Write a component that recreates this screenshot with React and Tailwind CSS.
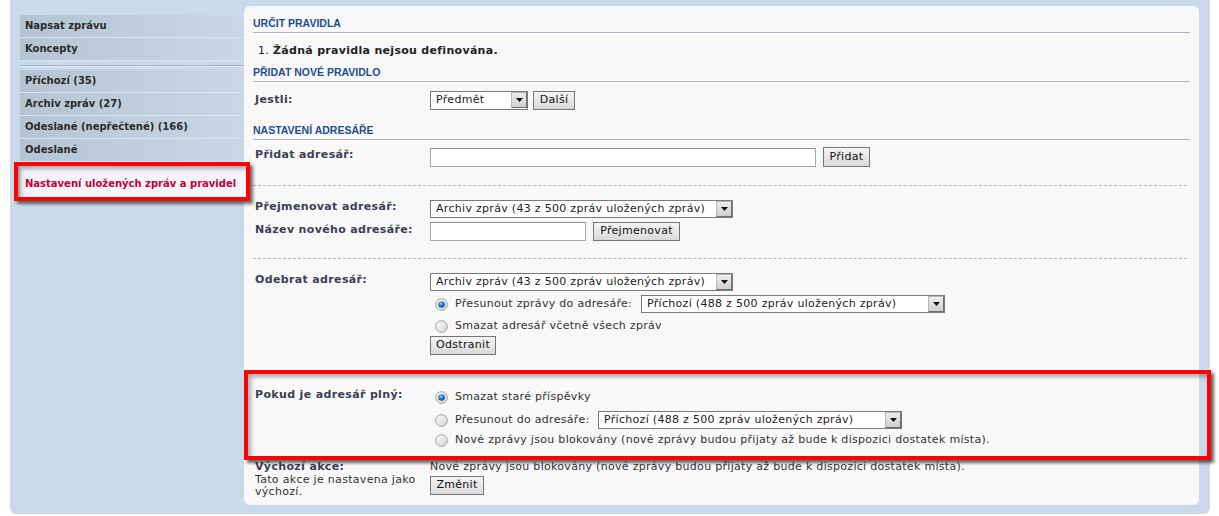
import React from 'react'

const SIDE = ['Příchozí (35)', 'Archiv zpráv (27)', 'Odeslané (nepřečtené) (166)', 'Odeslané']

function SideItem({ children }) {
  return (
    <div className="h-[23px] border-b border-[#d9e4ee] bg-gradient-to-r from-[#b4c4d3] to-[#c9d8e6] pl-[5px] text-[10px] font-bold leading-[22px] text-[#2b2b2b]">
      {children}
    </div>
  )
}

function Heading({ children, className = '' }) {
  return (
    <div className={'border-b border-[#a8b4c1] pb-[2px] font-["Liberation_Sans",Arial,sans-serif] text-[10.5px] font-bold leading-[14px] text-[#1d4f90] ' + className}>
      {children}
    </div>
  )
}

function Select({ value, className = '' }) {
  return (
    <div className={'flex h-[18px] border border-[#7a7a7a] bg-white ' + className}>
      <span className="flex-1 truncate pl-[5px] text-[11px] leading-[16px] tracking-[0.3px] text-[#222]">{value}</span>
      <span className="flex h-[16px] w-[16px] items-center justify-center border border-t-[#b5b5b5] border-l-[#b5b5b5] border-r-[#6f6f6f] border-b-[#6f6f6f] bg-gradient-to-b from-[#eeeeee] to-[#cfcfcf]">
        <svg width="7" height="4" viewBox="0 0 7 4"><path d="M0 0h7L3.5 4z" fill="#111" /></svg>
      </span>
    </div>
  )
}

function Button({ children, className = '' }) {
  return (
    <div className={'flex h-[19px] items-center justify-center border border-[#767676] bg-gradient-to-b from-[#f5f5f5] to-[#d9d9d9] text-[11px] tracking-[0.3px] text-[#111] ' + className}>
      {children}
    </div>
  )
}

function Input({ className = '' }) {
  return <div className={'h-[19px] border border-[#a9a9a9] border-t-[#8f8f8f] bg-white ' + className} />
}

function Radio({ checked }) {
  return (
    <svg width="13" height="13" viewBox="0 0 13 13" className="shrink-0">
      <defs>
        <linearGradient id="rg" x1="0" y1="0" x2="1" y2="1">
          <stop offset="0" stopColor="#ffffff" />
          <stop offset="1" stopColor="#d4d4d4" />
        </linearGradient>
        <radialGradient id="bg" cx="0.4" cy="0.35" r="0.7">
          <stop offset="0" stopColor="#8cc6f0" />
          <stop offset="0.6" stopColor="#1f6fbf" />
          <stop offset="1" stopColor="#0b3f7c" />
        </radialGradient>
      </defs>
      <circle cx="6.5" cy="6.5" r="5.8" fill="url(#rg)" stroke="#9d9d9d" strokeWidth="1" />
      {checked && <circle cx="6.5" cy="6.5" r="3.3" fill="url(#bg)" />}
    </svg>
  )
}

function RadioRow({ checked, children, className = '' }) {
  return (
    <div className={'flex items-center gap-[7px] pl-[5px] text-[11px] tracking-[0.3px] text-[#333] ' + className}>
      <Radio checked={checked} />
      {children}
    </div>
  )
}

function Row({ label, children, className = '', labelClass = 'leading-[16px]' }) {
  return (
    <div className={'flex pl-[2px] ' + className}>
      <div className={'w-[175px] shrink-0 text-[11px] font-bold tracking-[0.35px] text-[#3a4055] ' + labelClass}>{label}</div>
      <div className="flex-1">{children}</div>
    </div>
  )
}

function Dashed({ className = '' }) {
  return <div className={'mr-[3px] border-t border-dashed border-[#adb9c5] ' + className} />
}

export default function App() {
  return (
    <div className="relative h-[516px] w-[1219px] overflow-hidden bg-white font-['DejaVu_Sans',Verdana,sans-serif]">
      <div className="ml-[10px] flex h-[514px] w-[1200px] rounded-b-[6px] bg-[#c9daea]">
        {/* sidebar */}
        <div className="w-[234px] shrink-0 pl-[10px] pt-[15px]">
          <SideItem>Napsat zprávu</SideItem>
          <SideItem>Koncepty</SideItem>
          <div className="mt-[4px] h-[2px] border-t border-[#9fb1c3] bg-[#e3eaf1]" />
          <div className="mt-[3px]">
            {SIDE.map(s => <SideItem key={s}>{s}</SideItem>)}
          </div>
          <div className="flex h-[38px] items-center bg-[#f3f5f8] pl-[5px] pt-[4px] text-[10px] font-bold text-[#c4003a]">
            Nastavení uložených zpráv a pravidel
          </div>
        </div>

        {/* main card */}
        <div className="mt-[6px] h-[499px] w-[955px] shrink-0 rounded-[6px] bg-[#f8f8f8] px-[9px] pt-[10px] text-[#333]">
          <Heading>URČIT PRAVIDLA</Heading>
          <div className="mt-[11px] flex pl-[5px] text-[11px] leading-[14px] tracking-[0.3px] text-[#222]">
            <span className="w-[15px]">1.</span>
            <span className="font-bold">Žádná pravidla nejsou definována.</span>
          </div>

          <Heading className="mt-[7px]">PŘIDAT NOVÉ PRAVIDLO</Heading>
          <Row label="Jestli:" className="mt-[9px]" labelClass="leading-[18px]">
            <div className="flex gap-[5px]">
              <Select value="Předmět" className="h-[19px] w-[98px]" />
              <Button className="w-[42px]">Další</Button>
            </div>
          </Row>

          <Heading className="mt-[13px]">NASTAVENÍ ADRESÁŘE</Heading>
          <Row label="Přidat adresář:" className="mt-[7px]">
            <div className="flex items-center gap-[7px]">
              <Input className="h-[18px] w-[386px]" />
              <Button className="h-[20px] w-[47px]">Přidat</Button>
            </div>
          </Row>

          <Dashed className="mt-[18px]" />
          <Row label="Přejmenovat adresář:" className="mt-[14px]" labelClass="leading-[14px]">
            <Select value="Archiv zpráv (43 z 500 zpráv uložených zpráv)" className="w-[303px]" />
          </Row>
          <Row label="Název nového adresáře:" className="mt-[4px]">
            <div className="flex gap-[7px]">
              <Input className="w-[156px]" />
              <Button className="w-[87px]">Přejmenovat</Button>
            </div>
          </Row>

          <Dashed className="mt-[17px]" />
          <Row label="Odebrat adresář:" className="mt-[14px]" labelClass="leading-[14px]">
            <Select value="Archiv zpráv (43 z 500 zpráv uložených zpráv)" className="w-[303px]" />
            <RadioRow checked className="mt-[4px] h-[18px]">
              <span className="w-[179px]">Přesunout zprávy do adresáře:</span>
              <Select value="Příchozí (488 z 500 zpráv uložených zpráv)" className="w-[304px]" />
            </RadioRow>
            <RadioRow className="mt-[5px] h-[16px]">Smazat adresář včetně všech zpráv</RadioRow>
            <Button className="mt-[2px] w-[66px]">Odstranit</Button>
          </Row>

          <Row label="Pokud je adresář plný:" className="mt-[32px]">
            <RadioRow checked className="mt-[2px] h-[16px]">Smazat staré příspěvky</RadioRow>
            <RadioRow className="mt-[6px] h-[18px]">
              <span className="w-[136px]">Přesunout do adresáře:</span>
              <Select value="Příchozí (488 z 500 zpráv uložených zpráv)" className="w-[304px]" />
            </RadioRow>
            <RadioRow className="mt-[3px] h-[16px]">
              Nové zprávy jsou blokovány (nové zprávy budou přijaty až bude k dispozici dostatek místa).
            </RadioRow>
          </Row>

          <Row
            label={
              <>
                <div className="leading-[15px]">Výchozí akce:</div>
                <div className="w-[172px] font-normal leading-[12px] tracking-[0.3px] text-[#333]">Tato akce je nastavena jako výchozí.</div>
              </>
            }
            className="mt-[11px]"
          >
            <div className="text-[11px] leading-[15px] tracking-[0.3px] text-[#333]">
              Nové zprávy jsou blokovány (nové zprávy budou přijaty až bude k dispozici dostatek místa).
            </div>
            <Button className="mt-[2px] w-[54px]">Změnit</Button>
          </Row>
        </div>
      </div>

      {/* annotation frames */}
      <div className="pointer-events-none absolute left-[14px] top-[162px] h-[39px] w-[236px] border-4 border-[#f00] shadow-[3px_3px_3px_rgba(0,0,0,0.55),inset_3px_3px_4px_rgba(0,0,0,0.3)]" />
      <div className="pointer-events-none absolute left-[244px] top-[370px] h-[90px] w-[967px] border-4 border-[#f00] shadow-[3px_3px_3px_rgba(0,0,0,0.6),inset_3px_3px_4px_rgba(0,0,0,0.3)]" />
    </div>
  )
}
